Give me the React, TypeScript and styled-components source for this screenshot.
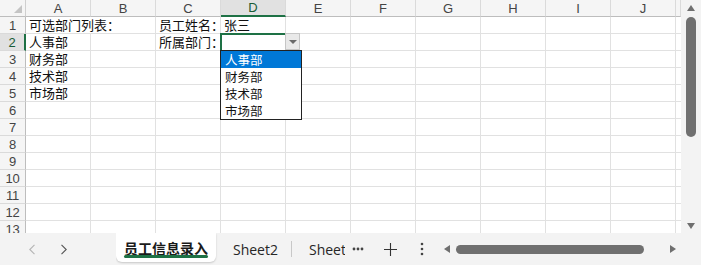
import styled, { createGlobalStyle } from "styled-components";

const GlobalStyle = createGlobalStyle`
  html, body {
    margin: 0;
    padding: 0;
    background: #ffffff;
  }
  body {
    font-family: "Noto Sans CJK SC", "Liberation Sans", sans-serif;
  }
`;

const green = "#1e7145";

const Window = styled.div`
  width: 701px;
  height: 265px;
  display: flex;
  flex-direction: column;
  overflow: hidden;
  background: #f3f3f3;
`;

const Body = styled.div`
  display: flex;
  height: 233px;
`;

const Sheet = styled.div`
  display: grid;
  grid-template-columns: 26px repeat(10, 65px) 5px;
  grid-auto-rows: 17px;
  align-content: start;
  width: 681px;
  height: 233px;
  overflow: hidden;
  background: #ffffff;
`;

const Corner = styled.div`
  position: relative;
  background: #f5f5f5;
  border-right: 1px solid #cfcfcf;
  border-bottom: 1px solid #bdbdbd;
  box-sizing: border-box;

  &::after {
    content: "";
    position: absolute;
    right: 3px;
    bottom: 3px;
    border-left: 8px solid transparent;
    border-bottom: 8px solid #c4c4c4;
  }
`;

const ColHeader = styled.div<{ $selected?: boolean }>`
  display: flex;
  align-items: center;
  justify-content: center;
  box-sizing: border-box;
  font-family: "Liberation Sans", Arial, sans-serif;
  font-size: 13px;
  line-height: 15px;
  color: ${(p) => (p.$selected ? "#185c37" : "#444444")};
  background: ${(p) => (p.$selected ? "#e1e1e1" : "#f5f5f5")};
  border-right: 1px solid #dadada;
  border-bottom: ${(p) =>
    p.$selected ? `2px solid ${green}` : "1px solid #bdbdbd"};
`;

const RowHeader = styled.div<{ $selected?: boolean }>`
  display: flex;
  align-items: center;
  justify-content: center;
  box-sizing: border-box;
  font-family: "Liberation Sans", Arial, sans-serif;
  font-size: 13px;
  line-height: 15px;
  letter-spacing: -0.3px;
  color: ${(p) => (p.$selected ? "#185c37" : "#444444")};
  background: ${(p) => (p.$selected ? "#e1e1e1" : "#f5f5f5")};
  border-bottom: 1px solid #dadada;
  border-right: ${(p) =>
    p.$selected ? `2px solid ${green}` : "1px solid #bdbdbd"};
`;

const Cell = styled.div<{ $span?: number; $active?: boolean }>`
  position: relative;
  grid-column: span ${(p) => p.$span ?? 1};
  display: flex;
  align-items: center;
  box-sizing: border-box;
  padding: 0 3px;
  font-size: 13px;
  line-height: 16px;
  font-feature-settings: "palt";
  color: #111111;
  white-space: nowrap;
  border-right: 1px solid #e1e1e1;
  border-bottom: 1px solid #e1e1e1;
  ${(p) =>
    p.$active &&
    `
    z-index: 2;
    outline: 2px solid ${green};
    outline-offset: -1px;
  `}
`;

const DropButton = styled.div`
  position: absolute;
  left: 100%;
  top: -1px;
  width: 15px;
  height: 17px;
  box-sizing: border-box;
  background: #e9e9e9;
  border: 1px solid #c6c6c6;
  display: flex;
  align-items: center;
  justify-content: center;

  &::after {
    content: "";
    border-left: 4px solid transparent;
    border-right: 4px solid transparent;
    border-top: 4px solid #6a6a6a;
  }
`;

const DropList = styled.div`
  position: absolute;
  left: -1px;
  top: 100%;
  width: 82px;
  box-sizing: border-box;
  background: #ffffff;
  border: 1px solid #222222;
  z-index: 3;
`;

const DropItem = styled.div<{ $highlight?: boolean }>`
  height: 17px;
  display: flex;
  align-items: center;
  padding-left: 4px;
  font-size: 12.5px;
  line-height: 16px;
  color: ${(p) => (p.$highlight ? "#ffffff" : "#111111")};
  background: ${(p) => (p.$highlight ? "#0078d7" : "transparent")};
`;

const VScroll = styled.div`
  width: 20px;
  display: flex;
  flex-direction: column;
  align-items: center;
  background: #f3f3f3;
`;

const ArrowBox = styled.div<{ $w?: number; $h?: number }>`
  width: ${(p) => p.$w ?? 18}px;
  height: ${(p) => p.$h ?? 16}px;
  display: flex;
  align-items: center;
  justify-content: center;
  flex-shrink: 0;
`;

const VThumb = styled.div`
  width: 10px;
  height: 120px;
  margin-top: 1px;
  border-radius: 5px;
  background: #707070;
`;

const Spacer = styled.div`
  flex: 1;
`;

const TabBar = styled.div`
  height: 32px;
  display: flex;
  align-items: stretch;
  background: #f3f3f3;
`;

const NavGroup = styled.div`
  width: 116px;
  padding-left: 16px;
  box-sizing: border-box;
  display: flex;
`;

const NavButton = styled.div`
  width: 32px;
  display: flex;
  align-items: center;
  justify-content: center;
`;

const TabStrip = styled.div`
  width: 229px;
  display: flex;
  align-items: stretch;
  overflow: hidden;
  white-space: nowrap;
`;

const ActiveTab = styled.div`
  position: relative;
  width: 100px;
  height: 29px;
  flex-shrink: 0;
  display: flex;
  align-items: center;
  justify-content: center;
  background: #ffffff;
  border-radius: 0 0 6px 6px;
  box-shadow: 0 1px 2px rgba(0, 0, 0, 0.18);
  font-size: 14px;
  font-weight: 700;
  color: #1a1a1a;

  &::after {
    content: "";
    position: absolute;
    left: 8px;
    right: 8px;
    bottom: 4px;
    height: 3px;
    border-radius: 2px;
    background: ${green};
  }
`;

const Tab = styled.div`
  flex-shrink: 0;
  display: flex;
  align-items: center;
  padding: 0 13px 0 17px;
  font-family: "Open Sans", "Noto Sans", sans-serif;
  font-size: 14px;
  color: #262626;
`;

const TabDivider = styled.div`
  width: 1px;
  height: 16px;
  align-self: center;
  flex-shrink: 0;
  background: #c8c8c8;
`;

const ToolButton = styled.div<{ $w: number }>`
  width: ${(p) => p.$w}px;
  display: flex;
  align-items: center;
  justify-content: center;
  flex-shrink: 0;
`;

const HScroll = styled.div`
  flex: 1;
  display: flex;
  align-items: center;
  margin-left: 4px;
  padding-right: 19px;
`;

const HThumb = styled.div`
  width: 188px;
  height: 9px;
  border-radius: 5px;
  background: #707070;
`;

const Tri = ({ dir }: { dir: "up" | "down" | "left" | "right" }) => {
  const pts = {
    up: "0,6 4,0 8,6",
    down: "0,0 8,0 4,6",
    left: "6,0 6,8 0,4",
    right: "0,0 6,4 0,8",
  }[dir];
  const vertical = dir === "up" || dir === "down";
  return (
    <svg
      width={vertical ? 8 : 6}
      height={vertical ? 6 : 8}
      viewBox={vertical ? "0 0 8 6" : "0 0 6 8"}
    >
      <polygon points={pts} fill="#6f6f6f" />
    </svg>
  );
};

const Chevron = ({ dir, color }: { dir: "left" | "right"; color: string }) => (
  <svg width="8" height="11" viewBox="0 0 8 11">
    <path
      d={dir === "left" ? "M6.5 0.8 L1.8 5.5 L6.5 10.2" : "M1.5 0.8 L6.2 5.5 L1.5 10.2"}
      fill="none"
      stroke={color}
      strokeWidth="1.1"
    />
  </svg>
);

const columns = ["A", "B", "C", "D", "E", "F", "G", "H", "I", "J"];

type Row = { [col: string]: string };

const rows: Row[] = [
  { A: "可选部门列表：", C: "员工姓名：", D: "张三" },
  { A: "人事部", C: "所属部门：" },
  { A: "财务部" },
  { A: "技术部" },
  { A: "市场部" },
  {}, {}, {}, {}, {}, {}, {}, {},
];

const options = ["人事部", "财务部", "技术部", "市场部"];

const renderRow = (row: Row, r: number) => {
  const cells = [];
  for (let c = 0; c < columns.length; c++) {
    const col = columns[c];
    const spanTwo = r === 0 && col === "A";
    const active = r === 1 && col === "D";
    cells.push(
      <Cell key={col} $span={spanTwo ? 2 : 1} $active={active}>
        {row[col]}
        {active && (
          <>
            <DropButton />
            <DropList>
              {options.map((o, i) => (
                <DropItem key={o} $highlight={i === 0}>
                  {o}
                </DropItem>
              ))}
            </DropList>
          </>
        )}
      </Cell>
    );
    if (spanTwo) c++;
  }
  return cells;
};

export default function App() {
  return (
    <>
      <GlobalStyle />
      <Window>
        <Body>
          <Sheet>
            <Corner />
            {columns.map((c) => (
              <ColHeader key={c} $selected={c === "D"}>
                {c}
              </ColHeader>
            ))}
            <ColHeader />
            {rows.map((row, r) => [
              <RowHeader key={`h${r}`} $selected={r === 1}>
                {r + 1}
              </RowHeader>,
              ...renderRow(row, r),
              <Cell key={`x${r}`} />,
            ])}
          </Sheet>
          <VScroll>
            <ArrowBox $w={20} $h={16}>
              <Tri dir="up" />
            </ArrowBox>
            <VThumb />
            <Spacer />
            <ArrowBox $w={20} $h={14}>
              <Tri dir="down" />
            </ArrowBox>
          </VScroll>
        </Body>
        <TabBar>
          <NavGroup>
            <NavButton>
              <Chevron dir="left" color="#b5b5b5" />
            </NavButton>
            <NavButton>
              <Chevron dir="right" color="#555555" />
            </NavButton>
          </NavGroup>
          <TabStrip>
            <ActiveTab>员工信息录入</ActiveTab>
            <Tab>Sheet2</Tab>
            <TabDivider />
            <Tab>Sheet3</Tab>
          </TabStrip>
          <ToolButton $w={25}>
            <svg width="12" height="4" viewBox="0 0 12 4">
              <circle cx="2" cy="2" r="1.4" fill="#444" />
              <circle cx="6" cy="2" r="1.4" fill="#444" />
              <circle cx="10" cy="2" r="1.4" fill="#444" />
            </svg>
          </ToolButton>
          <ToolButton $w={40}>
            <svg width="13" height="13" viewBox="0 0 13 13">
              <path d="M6.5 0 V13 M0 6.5 H13" stroke="#333" strokeWidth="1.1" />
            </svg>
          </ToolButton>
          <ToolButton $w={24}>
            <svg width="4" height="14" viewBox="0 0 4 14">
              <circle cx="2" cy="2" r="1.3" fill="#444" />
              <circle cx="2" cy="7" r="1.3" fill="#444" />
              <circle cx="2" cy="12" r="1.3" fill="#444" />
            </svg>
          </ToolButton>
          <HScroll>
            <ArrowBox $w={18}>
              <Tri dir="left" />
            </ArrowBox>
            <HThumb />
            <Spacer />
            <ArrowBox $w={18}>
              <Tri dir="right" />
            </ArrowBox>
          </HScroll>
        </TabBar>
      </Window>
    </>
  );
}
